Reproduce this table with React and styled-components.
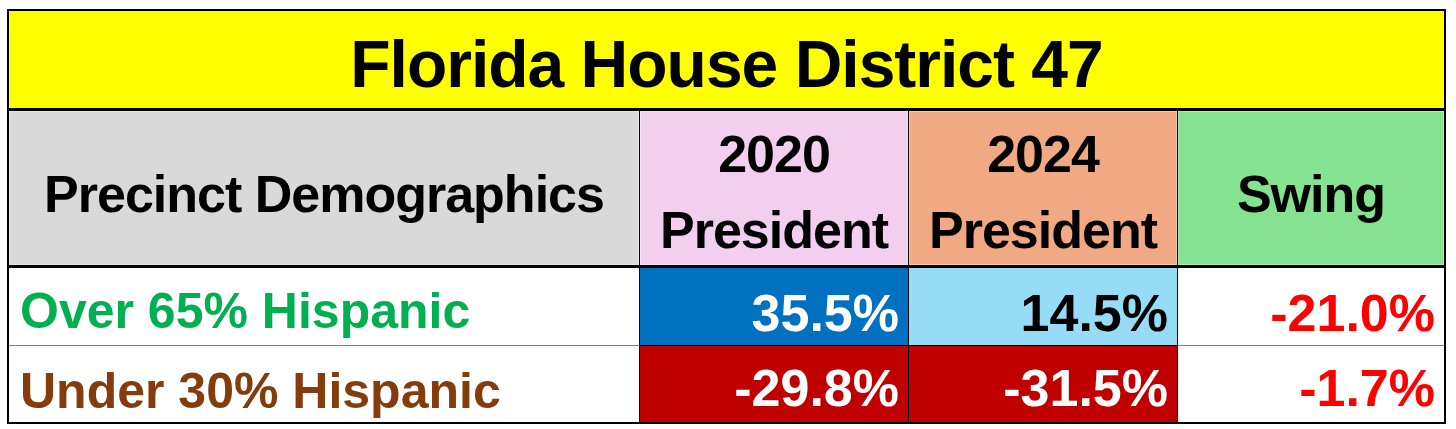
import React from "react";
import styled, { createGlobalStyle } from "styled-components";

const GlobalStyle = createGlobalStyle`
  html, body { margin: 0; padding: 0; background: #ffffff; }
  body { font-family: "Liberation Sans", Arial, sans-serif; }
`;

const Page = styled.div`
  padding: 9px 0 0 7px;
`;

const Table = styled.div`
  box-sizing: border-box;
  width: 1439px;
  height: 415px;
  border: 2px solid #000;
  display: grid;
  grid-template-columns: 631px 269px 269px 266px;
  grid-template-rows: 100px 157px 78px 76px;
  font-family: "Liberation Sans", Arial, sans-serif;
  font-weight: 700;
`;

const Title = styled.div`
  grid-column: 1 / -1;
  box-sizing: border-box;
  background: #ffff00;
  border-bottom: 3px solid #000;
  display: flex;
  align-items: center;
  justify-content: center;
  padding-top: 9px;
  font-size: 66px;
  line-height: 1;
  letter-spacing: -1px;
  color: #000;
`;

const HeadCell = styled.div`
  box-sizing: border-box;
  background: ${(p) => p.$bg};
  border-right: ${(p) => (p.$last ? "none" : "1px solid #000")};
  border-bottom: 3px solid #000;
  box-shadow: inset 0 0 0 1px rgba(255, 255, 255, 0.35);
  display: flex;
  flex-direction: column;
  align-items: center;
  justify-content: center;
  padding-top: ${(p) => (p.$twoLine ? "8px" : "12px")};
  font-size: 52px;
  line-height: ${(p) => (p.$twoLine ? "76px" : "1")};
  letter-spacing: -1px;
  color: #000;
  text-align: center;
`;

const Label = styled.div`
  box-sizing: border-box;
  border-right: 1px solid #000;
  border-bottom: ${(p) => (p.$lastRow ? "none" : "1px solid #7f7f7f")};
  display: flex;
  align-items: flex-end;
  padding: 0 0 ${(p) => (p.$lastRow ? "6px" : "9px")} 11px;
  font-size: 50px;
  line-height: 1;
  color: ${(p) => p.$color};
`;

const Value = styled.div`
  box-sizing: border-box;
  background: ${(p) => p.$bg};
  color: ${(p) => p.$color};
  border-right: ${(p) => (p.$last ? "none" : "1px solid #000")};
  border-bottom: ${(p) =>
    p.$lastRow ? "none" : `1px solid ${p.$last ? "#7f7f7f" : "#000"}`};
  display: flex;
  align-items: flex-end;
  justify-content: flex-end;
  padding: 0 9px ${(p) => (p.$lastRow ? "8px" : "6px")} 0;
  font-size: 52px;
  line-height: 1;
`;

const rows = [
  {
    label: "Over 65% Hispanic",
    labelColor: "#00b050",
    values: [
      { text: "35.5%", bg: "#0070c0", color: "#ffffff" },
      { text: "14.5%", bg: "#97dcf7", color: "#000000" },
      { text: "-21.0%", bg: "#ffffff", color: "#ff0000" },
    ],
  },
  {
    label: "Under 30% Hispanic",
    labelColor: "#843c0c",
    values: [
      { text: "-29.8%", bg: "#c00000", color: "#ffffff" },
      { text: "-31.5%", bg: "#c00000", color: "#ffffff" },
      { text: "-1.7%", bg: "#ffffff", color: "#ff0000" },
    ],
  },
];

export default function App() {
  return (
    <>
      <GlobalStyle />
      <Page>
        <Table>
          <Title>Florida House District 47</Title>
          <HeadCell $bg="#d9d9d9">Precinct Demographics</HeadCell>
          <HeadCell $bg="#f2ceef" $twoLine>
            <span>2020</span>
            <span>President</span>
          </HeadCell>
          <HeadCell $bg="#f1a983" $twoLine>
            <span>2024</span>
            <span>President</span>
          </HeadCell>
          <HeadCell $bg="#84e290" $last>
            Swing
          </HeadCell>
          {rows.map((r, ri) => {
            const lastRow = ri === rows.length - 1;
            return (
              <React.Fragment key={r.label}>
                <Label $color={r.labelColor} $lastRow={lastRow}>
                  {r.label}
                </Label>
                {r.values.map((v, vi) => (
                  <Value
                    key={vi}
                    $bg={v.bg}
                    $color={v.color}
                    $last={vi === r.values.length - 1}
                    $lastRow={lastRow}
                  >
                    {v.text}
                  </Value>
                ))}
              </React.Fragment>
            );
          })}
        </Table>
      </Page>
    </>
  );
}
